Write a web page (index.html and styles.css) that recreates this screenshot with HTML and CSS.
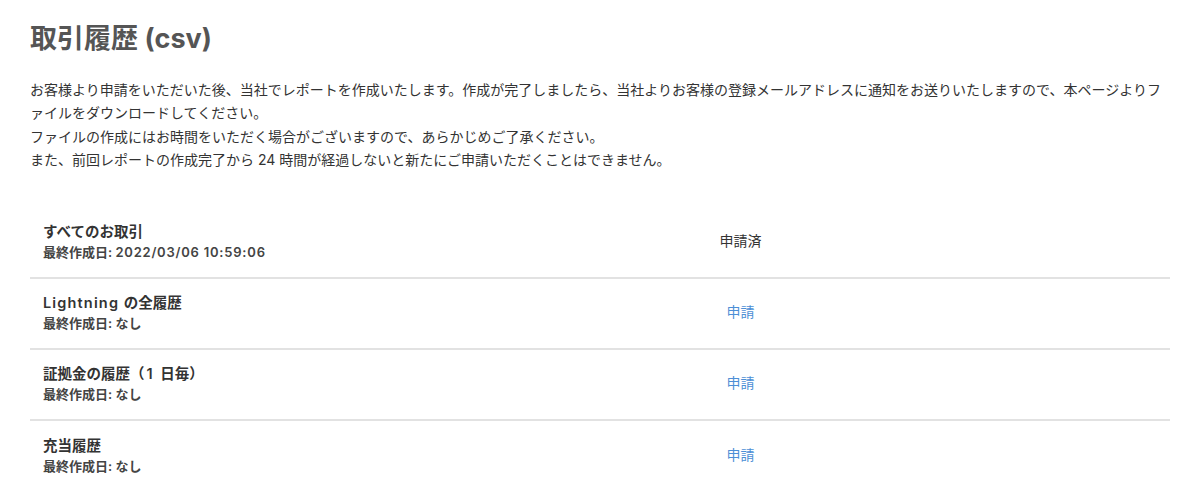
FILE: index.html
```html
<!DOCTYPE html>
<html lang="ja">
<head>
<meta charset="utf-8">
<title>取引履歴 (csv)</title>
<link rel="stylesheet" href="styles.css">
</head>
<body>
<main class="page">
  <h1 class="page-title">取引履歴 (csv)</h1>
  <div class="intro">
    <p>お客様より申請をいただいた後、当社でレポートを作成いたします。作成が完了しましたら、当社よりお客様の登録メールアドレスに通知をお送りいたしますので、本ページよりファイルをダウンロードしてください。</p>
    <p>ファイルの作成にはお時間をいただく場合がございますので、あらかじめご了承ください。</p>
    <p>また、前回レポートの作成完了から 24 時間が経過しないと新たにご申請いただくことはできません。</p>
  </div>
  <ul class="reports">
    <li class="report">
      <div class="report-info">
        <div class="report-name">すべてのお取引</div>
        <div class="report-date">最終作成日: <span class="latin">2022/03/06 10:59:06</span></div>
      </div>
      <div class="report-status">申請済</div>
    </li>
    <li class="report">
      <div class="report-info">
        <div class="report-name"><span class="latin">Lightning</span> の全履歴</div>
        <div class="report-date">最終作成日: なし</div>
      </div>
      <div class="report-status"><a class="apply" href="#">申請</a></div>
    </li>
    <li class="report">
      <div class="report-info">
        <div class="report-name">証拠金の履歴（<span class="num">1</span> 日毎）</div>
        <div class="report-date">最終作成日: なし</div>
      </div>
      <div class="report-status"><a class="apply" href="#">申請</a></div>
    </li>
    <li class="report">
      <div class="report-info">
        <div class="report-name">充当履歴</div>
        <div class="report-date">最終作成日: なし</div>
      </div>
      <div class="report-status"><a class="apply" href="#">申請</a></div>
    </li>
  </ul>
</main>
</body>
</html>
```

FILE: styles.css
```css
* { box-sizing: border-box; }

html, body {
  margin: 0;
  padding: 0;
  background: #fff;
}

body {
  font-family: "Inter", "Noto Sans CJK JP", sans-serif;
  color: #333;
}

.page {
  padding: 21px 30px 0 30px;
  width: 1200px;
}

.page-title {
  margin: 0;
  font-size: 27px;
  line-height: 36px;
  font-weight: 700;
  color: #555;
}

.intro {
  margin-top: 21px;
  font-size: 14px;
  line-height: 23.4px;
  color: #333;
}

.intro p {
  margin: 0;
}

.reports {
  list-style: none;
  margin: 36px 0 0 0;
  padding: 0;
}

.report {
  display: grid;
  grid-template-columns: 650px 120px 1fr;
  align-items: center;
  height: 71px;
  padding-left: 13px;
  border-bottom: 2px solid #e2e2e2;
}

.report:last-child {
  border-bottom: none;
}

.report-info {
  margin-top: -2px;
}

.report-name {
  font-size: 14.5px;
  line-height: 20px;
  font-weight: 600;
  color: #333;
}

.report-date {
  margin-top: 1px;
  font-size: 13px;
  line-height: 18px;
  font-weight: 600;
  color: #444;
}

.latin {
  letter-spacing: 0.06em;
}

.report-name .latin {
  letter-spacing: 0.08em;
  margin-right: 1px;
}

.num {
  margin: 0 4px 0 2px;
}

.report-status {
  grid-column: 2;
  margin-left: -25px;
  margin-bottom: 4px;
  text-align: center;
  font-size: 14px;
  color: #333;
}

.apply {
  color: #4d8fd6;
  text-decoration: none;
}
```
